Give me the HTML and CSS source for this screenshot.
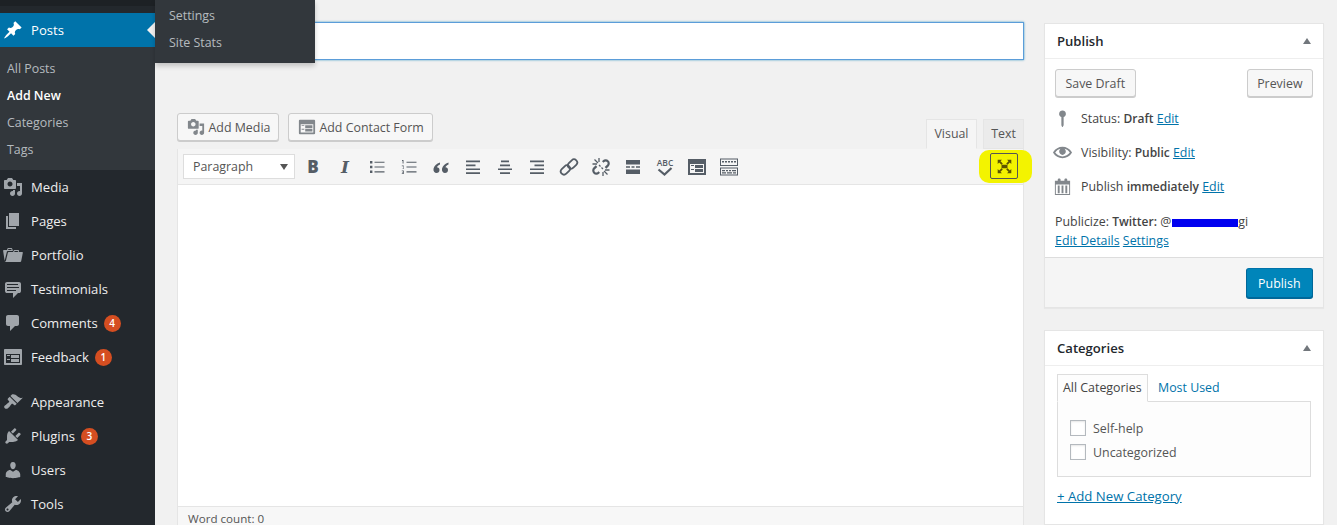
FILE: index.html
```html
<!DOCTYPE html>
<html lang="en">
<head>
<meta charset="utf-8">
<title>Add New Post</title>
<link rel="stylesheet" href="styles.css">
</head>
<body>
<nav class="nav">
  <div class="nav-top"></div>
  <a class="nav-row current"><svg class="nav-ico" viewBox="0 0 20 20"><path d="M10.44 3.02l1.82-1.82 6.36 6.35-1.83 1.82c-1.05-.68-2.48-.57-3.41.36l-.75.75c-.92.93-1.04 2.35-.35 3.41l-1.83 1.82-2.41-2.41-2.8 2.79c-.42.42-3.38 2.71-3.8 2.29s1.86-3.39 2.28-3.81l2.79-2.79L4.1 9.36l1.83-1.82c1.05.69 2.48.57 3.4-.36l.75-.75c.93-.92 1.05-2.35.36-3.41z"/></svg>Posts</a>
  <div class="sub">
    <a class="sub-row">All Posts</a>
    <a class="sub-row on">Add New</a>
    <a class="sub-row">Categories</a>
    <a class="sub-row">Tags</a>
  </div>
  <a class="nav-row"><svg class="nav-ico" viewBox="0 0 20 20"><path d="M13 11V4c0-.55-.45-1-1-1h-1.67L9 1H5L3.67 3H2c-.55 0-1 .45-1 1v7c0 .55.45 1 1 1h10c.55 0 1-.45 1-1zM7 4.5c1.38 0 2.5 1.12 2.5 2.5S8.38 9.5 7 9.5 4.5 8.38 4.5 7 5.62 4.5 7 4.5zM14 6h5v10.5c0 1.38-1.12 2.5-2.5 2.5S14 17.88 14 16.5s1.12-2.5 2.5-2.5c.17 0 .34.02.5.05V9h-3V6zm-4 8.05V13h2v3.5c0 1.38-1.12 2.5-2.5 2.5S7 17.88 7 16.5 8.12 14 9.5 14c.17 0 .34.02.5.05z"/></svg>Media</a>
  <a class="nav-row"><svg class="nav-ico" viewBox="0 0 20 20"><path d="M6 15V2h10v13H6zm-1 1h8v2H3V5h2v11z"/></svg>Pages</a>
  <a class="nav-row"><svg class="nav-ico" viewBox="0 0 20 20"><path d="M4 5H.78c-.37 0-.74.32-.69.84l1.56 9.99S3.5 8.47 3.86 6.7c.11-.53.61-.7.98-.7H10s-.7-2.08-.77-2.31C9.11 3.25 8.89 3 8.45 3H5.14c-.36 0-.7.23-.8.64C4.25 4.04 4 5 4 5zm4.88 0h-4s.42-1 .87-1h2.13c.48 0 1 1 1 1zM2.67 16.25c-.31.47-.76.75-1.26.75h15.73c.54 0 .92-.31 1.03-.83.44-2.19 1.68-8.44 1.68-8.44.07-.5-.3-.73-.62-.73H16V5.53c0-.16-.26-.53-.66-.53h-3.76c-.52 0-.87.58-.87.58L10 7H5.59c-.32 0-.63.19-.69.5 0 0-1.59 6.7-1.72 7.33-.07.37-.22.99-.51 1.42zM15.38 7H11s.58-1 1.13-1h2.29c.71 0 .96 1 .96 1z"/></svg>Portfolio</a>
  <a class="nav-row"><svg class="nav-ico" viewBox="0 0 20 20"><path fill-rule="evenodd" d="M4 3h12c.55 0 1.02.2 1.41.59S18 4.45 18 5v7c0 .55-.2 1.02-.59 1.41S16.55 14 16 14h-1l-5 5v-5H4c-.55 0-1.02-.2-1.41-.59S2 12.55 2 12V5c0-.55.2-1.02.59-1.41S3.45 3 4 3zm11 2H4v1h11V5zm1 3H4v1h12V8zm-3 3H4v1h9v-1z"/></svg>Testimonials</a>
  <a class="nav-row"><svg class="nav-ico" viewBox="0 0 20 20"><path d="M5 2h9c1.1 0 2 .9 2 2v7c0 1.1-.9 2-2 2h-2l-5 5v-5H5c-1.1 0-2-.9-2-2V4c0-1.1.9-2 2-2z"/></svg>Comments<span class="count">4</span></a>
  <a class="nav-row"><svg class="nav-ico" viewBox="0 0 20 20"><path fill-rule="evenodd" d="M2 2h16c.55 0 1 .45 1 1v14c0 .55-.45 1-1 1H2c-.55 0-1-.45-1-1V3c0-.55.45-1 1-1zm15 14V7H3v9h14zM4 8v1h3V8H4zm4 0v3h8V8H8zm-4 4v1h3v-1H4zm4 0v3h8v-3H8z"/></svg>Feedback<span class="count">1</span></a>
  <div class="nav-sep"></div>
  <a class="nav-row"><svg class="nav-ico" viewBox="0 0 20 20"><path d="M14.48 11.06L7.41 3.99l1.5-1.5c.5-.56 2.3-.47 3.51.32 1.21.8 1.43 1.28 2.91 2.1 1.18.64 2.45 1.26 4.45.85zm-.71.71L6.7 4.7 4.93 6.47c-.39.39-.39 1.02 0 1.41l1.06 1.06c.39.39.39 1.03 0 1.42-.6.6-1.43 1.11-2.21 1.69-.35.26-.7.53-1.01.84C1.43 13.23.4 14.75 1.8 16.15c1.41 1.41 2.92.38 4.25-.95.31-.31.58-.66.84-1.01.58-.78 1.09-1.61 1.69-2.21.39-.39 1.02-.39 1.41 0l1.06 1.06c.39.39 1.02.39 1.41 0z"/></svg>Appearance</a>
  <a class="nav-row"><svg class="nav-ico" viewBox="0 0 20 20"><path d="M13.11 4.36L9.87 7.6 8 5.73l3.24-3.24c.35-.34 1.05-.2 1.56.32.52.51.66 1.21.31 1.55zm-8 1.77l.91-1.12 9.01 9.01-1.19.84c-.71.71-2.63 1.16-3.82 1.16H6.14L4.9 17.26c-.59.59-1.54.59-2.12 0-.59-.58-.59-1.53 0-2.12l1.24-1.24v-3.88c0-1.13.4-3.19 1.09-3.89zm7.26 3.97l3.24-3.24c.34-.35 1.04-.21 1.55.31.52.51.66 1.21.31 1.55l-3.24 3.25z"/></svg>Plugins<span class="count">3</span></a>
  <a class="nav-row"><svg class="nav-ico" viewBox="0 0 20 20"><path d="M10 9.25c-2.27 0-2.73-3.44-2.73-3.44C7 4.02 7.82 2 9.97 2c2.16 0 2.98 2.02 2.71 3.81 0 0-.41 3.44-2.68 3.44zm0 2.57L12.72 10c2.39 0 4.52 2.33 4.52 4.53v2.49s-3.65 1.13-7.24 1.13c-3.65 0-7.24-1.13-7.24-1.13v-2.49c0-2.25 1.94-4.48 4.47-4.48z"/></svg>Users</a>
  <a class="nav-row"><svg class="nav-ico" viewBox="0 0 20 20"><path fill-rule="evenodd" d="M16.68 9.77c-1.34 1.34-3.3 1.67-4.95.99l-5.41 6.52c-.99.99-2.59.99-3.58 0s-.99-2.59 0-3.57l6.52-5.42c-.68-1.65-.35-3.61.99-4.95 1.28-1.28 3.12-1.62 4.72-1.06l-2.89 2.89 2.82 2.82 2.86-2.87c.53 1.58.18 3.39-1.08 4.65zM3.81 16.21c.4.39 1.04.39 1.43 0 .4-.4.4-1.04 0-1.43-.39-.4-1.03-.4-1.43 0-.39.39-.39 1.03 0 1.43z"/></svg>Tools</a>
</nav>

<div class="flyout">
  <a class="fly-row">Settings</a>
  <a class="fly-row">Site Stats</a>
</div>
<div class="nav-arrow"></div>

<main class="content">
  <section class="editor-col">
    <div class="title-input"></div>
    <div class="media-bar">
      <div class="media-btns">
        <a class="btn"><svg class="btn-ico" viewBox="0 0 20 20"><path d="M13 11V4c0-.55-.45-1-1-1h-1.67L9 1H5L3.67 3H2c-.55 0-1 .45-1 1v7c0 .55.45 1 1 1h10c.55 0 1-.45 1-1zM7 4.5c1.38 0 2.5 1.12 2.5 2.5S8.38 9.5 7 9.5 4.5 8.38 4.5 7 5.62 4.5 7 4.5zM14 6h5v10.5c0 1.38-1.12 2.5-2.5 2.5S14 17.88 14 16.5s1.12-2.5 2.5-2.5c.17 0 .34.02.5.05V9h-3V6zm-4 8.05V13h2v3.5c0 1.38-1.12 2.5-2.5 2.5S7 17.88 7 16.5 8.12 14 9.5 14c.17 0 .34.02.5.05z"/></svg>Add Media</a>
        <a class="btn"><svg class="btn-ico" viewBox="0 0 20 20"><path fill-rule="evenodd" d="M2 2h16c.55 0 1 .45 1 1v14c0 .55-.45 1-1 1H2c-.55 0-1-.45-1-1V3c0-.55.45-1 1-1zm15 14V7H3v9h14zM4 8v1h3V8H4zm4 0v3h8V8H8zm-4 4v1h3v-1H4zm4 0v3h8v-3H8z"/></svg>Add Contact Form</a>
      </div>
      <div class="mode-tabs">
        <a class="mode-tab active">Visual</a>
        <a class="mode-tab">Text</a>
      </div>
    </div>
    <div class="editor">
      <div class="toolbar">
        <div class="format-select">Paragraph<span class="caret"></span></div>
        <span class="tool tool-b">B</span>
        <span class="tool tool-i">I</span>
        <span class="tool"><svg class="ti" viewBox="0 0 20 20"><path d="M3 4h2.400v2.400H3zM3 8.800h2.400v2.400H3zM3 13.600h2.400V16H3zM7.500 4.700h10v1.100h-10zM7.500 9.500h10v1.100h-10zM7.500 14.300h10v1.100h-10z"/></svg></span>
        <span class="tool"><svg class="ti" viewBox="0 0 20 20"><path d="M3 3h1.500v3.500H3.600V4H3zM2.800 8.500h2v3.200H3.700v-.7h.6V9.300H2.800zM2.800 13.500h2v3.500h-2v-.8h1.200v-.6H3v-.6h1V14.300H2.800zM7.500 4.700h10v1.100h-10zM7.500 9.500h10v1.100h-10zM7.500 14.300h10v1.100h-10z"/></svg></span>
        <span class="tool"><svg class="ti" viewBox="0 0 20 20"><path d="M9 5.500C5.500 6.500 3 8.800 2.500 11.800c-.4 2.500 1 4.200 3 4.200 1.800 0 3-1.300 3-3 0-1.600-1.100-2.700-2.600-2.700.4-1.100 1.600-2.100 3.100-2.700zM17.500 5.500c-3.500 1-6 3.300-6.500 6.300-.4 2.500 1 4.200 3 4.200 1.800 0 3-1.300 3-3 0-1.600-1.100-2.700-2.600-2.700.4-1.100 1.600-2.100 3.100-2.700z"/></svg></span>
        <span class="tool"><svg class="ti" viewBox="0 0 20 20"><path d="M3 3.500h14v1.700H3zM3 7.600h9.500v1.700H3zM3 11.400h14v1.700H3zM3 15.300h14V17H3z"/></svg></span>
        <span class="tool"><svg class="ti" viewBox="0 0 20 20"><path d="M6 3.500h8v1.700H6zM5 7.600h10v1.700H5zM3 11.400h14v1.700H3zM5 15.300h10V17H5z"/></svg></span>
        <span class="tool"><svg class="ti" viewBox="0 0 20 20"><path d="M3 3.500h14v1.700H3zM7.500 7.600H17v1.700H7.500zM3 11.400h14v1.700H3zM3 15.300h14V17H3z"/></svg></span>
        <span class="tool"><svg class="ti" viewBox="0 0 20 20"><rect class="ln" x="1.200" y="9.800" width="10.500" height="6.400" rx="3.200" transform="rotate(-45 6.450 13)"/><rect class="ln" x="8.300" y="3.800" width="10.500" height="6.400" rx="3.200" transform="rotate(-45 13.550 7)"/></svg></span>
        <span class="tool"><svg class="ti" viewBox="0 0 20 20"><path class="ln heavy" d="M11.800 5l.7-.7a3 3 0 0 1 4.300 0 3 3 0 0 1 0 4.300l-2.300 2.300M8.200 15l-.7.700a3 3 0 0 1-4.300 0 3 3 0 0 1 0-4.300l2.300-2.300"/><path class="ln thin" d="M3.500 2.500l3.500 3.500M1.500 7h4.500M8 1v4M16.500 17.500L13 14M18.500 13H14M12 19v-4M8 8l1.500 1.500M12 12l-1.500-1.500"/></svg></span>
        <span class="tool"><svg class="ti" viewBox="0 0 20 20"><path d="M3 3h14v4.500H3zM3 12.500h14V17H3zM3 9.300h4v1.400H3zM8.500 9.300h3v1.400h-3zM13 9.300h4v1.400h-4z"/></svg></span>
        <span class="tool tool-abc"><span class="abc">ABC</span><svg class="abc-check" viewBox="0 0 16 9"><path class="ln check-mark" d="M1.500 2.500l6 5 7-6.500"/></svg></span>
        <span class="tool"><svg class="ti" viewBox="0 0 20 20"><path fill-rule="evenodd" d="M1 2h18v16H1zM3 7v9h14V7zM4 8v1h3V8zM8 8v3h8V8zM4 12v1h3v-1zM8 12v3h8v-3z"/></svg></span>
        <span class="tool"><svg class="ti" viewBox="0 0 20 20"><path fill-rule="evenodd" d="M1 1.500h18V9H1zM2 2.500V8h16V2.500zM3 4h2v1.500H3zM6 4h2v1.500H6zM9 4h2v1.500H9zM12 4h2v1.500h-2zM15 4h2v1.500h-2zM1 10.500h18v8H1zM2 11.500v6h16v-6zM3 13h3v1.300H3zM7 13h2v1.300H7zM10 13h2v1.300h-2zM13 13h4v1.300h-4zM3 15.300h4v1.200H3zM8 15.300h5v1.200H8zM14 15.300h3v1.200h-3z"/></svg></span>
        <span class="full-blob"><span class="full-btn"><svg class="ti" viewBox="0 0 20 20"><path d="M2 2h5L5.300 3.700 8 6.400 6.400 8 3.700 5.300 2 7zM18 2v5l-1.700-1.700L13.600 8 12 6.400l2.700-2.700L13 2zM2 18v-5l1.700 1.700L6.400 12 8 13.600l-2.700 2.700L7 18zM18 18h-5l1.700-1.700L12 13.600l1.600-1.600 2.700 2.700L18 13zM6.500 7.800h7v4.400h-7z"/></svg></span></span>
      </div>
      <div class="editor-body"></div>
      <div class="editor-status">Word count: 0</div>
    </div>
  </section>

  <aside class="side-col">
    <section class="card card-publish">
      <header class="card-head"><h2>Publish</h2><span class="toggle"></span></header>
      <div class="pub-actions">
        <a class="btn btn-plain">Save Draft</a>
        <a class="btn btn-plain">Preview</a>
      </div>
      <div class="pub-row"><svg class="pub-ico" viewBox="0 0 20 20"><path d="M10 1.500a3.500 3.500 0 0 1 1.200 6.800V17l-1 2h-.6l-.8-2V8.300A3.500 3.500 0 0 1 10 1.500z"/></svg><span>Status: <b>Draft</b> <a class="link">Edit</a></span></div>
      <div class="pub-row"><svg class="pub-ico" viewBox="0 0 20 20"><path fill-rule="evenodd" d="M19.700 9.400C17.700 6 14 3.900 10 3.900S2.300 6 .3 9.400L0 10l.3.600c2 3.400 5.700 5.500 9.700 5.500s7.700-2.100 9.700-5.500l.3-.6-.3-.6zM10 14.100c-3.100 0-6-1.600-7.700-4.100C3.600 8 5.700 6.600 8 6.100c-.9.600-1.500 1.700-1.500 2.900 0 1.900 1.600 3.500 3.500 3.500s3.500-1.600 3.500-3.500c0-1.200-.6-2.300-1.500-2.900 2.300.5 4.400 1.900 5.700 3.900-1.700 2.500-4.600 4.100-7.700 4.100z"/></svg><span>Visibility: <b>Public</b> <a class="link">Edit</a></span></div>
      <div class="pub-row"><svg class="pub-ico" viewBox="0 0 20 20"><path fill-rule="evenodd" d="M15 4h3v15H2V4h3V3c0-.41.15-.76.44-1.060.29-.29.65-.44 1.060-.44s.77.15 1.060.44c.29.3.44.65.44 1.060v1h4V3c0-.41.15-.76.44-1.060.29-.29.65-.44 1.060-.44s.77.15 1.060.44c.29.3.44.65.44 1.060v1zM17 18V8H3v10h14zM5 9h2v8H5zM9 9h2v8H9zM13 9h2v8h-2z"/></svg><span>Publish <b>immediately</b> <a class="link">Edit</a></span></div>
      <div class="publicize">
        <div>Publicize: <b>Twitter:</b> @<span class="redact"></span>gi</div>
        <div><a class="link">Edit Details</a> <a class="link">Settings</a></div>
      </div>
      <footer class="pub-foot"><a class="btn btn-primary">Publish</a></footer>
    </section>

    <section class="card card-cats">
      <header class="card-head"><h2>Categories</h2><span class="toggle"></span></header>
      <div class="cat-tabs">
        <a class="cat-tab active">All Categories</a>
        <a class="cat-tab">Most Used</a>
      </div>
      <div class="cat-panel">
        <label class="cat-item"><span class="check"></span>Self-help</label>
        <label class="cat-item"><span class="check"></span>Uncategorized</label>
      </div>
      <a class="link add-cat">+ Add New Category</a>
    </section>
  </aside>
</main>
</body>
</html>
```

FILE: styles.css
```css
* { box-sizing: border-box; }
html, body { margin: 0; height: 525px; overflow: hidden; }
body {
  display: flex;
  background: #f1f1f1;
  font-family: "Open Sans", "Noto Sans", sans-serif;
  font-size: 12.4px;
  color: #444;
  position: relative;
}
b { font-weight: 600; font-size: 12px; }

.nav { width: 155px; flex: none; height: 525px; background: #23282d; overflow: hidden; }
.nav-top { height: 13px; border-top: 6px solid #1d2125; }
.nav-row {
  display: flex; align-items: center; height: 34px;
  color: #eee; font-size: 13.1px; padding-left: 31px; position: relative;
}
.nav-ico { position: absolute; left: 3px; top: 7px; width: 20px; height: 20px; fill: #a0a5aa; }
.nav-row.current { background: #0073aa; color: #fff; }
.nav-row.current .nav-ico { fill: #fff; }
.nav-sep { height: 11px; }
.sub { background: #32373c; padding: 8px 0 7px; }
.sub-row { display: flex; align-items: center; height: 27px; padding-left: 7px; color: rgba(240,245,250,.7); }
.sub-row.on { color: #fff; font-weight: 600; }
.count {
  display: inline-flex; align-items: center; justify-content: center;
  min-width: 17px; height: 17px; padding: 0 5px; margin-left: 6px;
  border-radius: 9px; background: #d54e21; color: #fff; font-size: 10px; font-weight: 600;
}
.nav-arrow {
  position: absolute; left: 147px; top: 22px; width: 0; height: 0;
  border: 8px solid transparent; border-left: 0; border-right-color: #f1f1f1;
}
.flyout {
  position: absolute; left: 155px; top: 0; width: 160px; height: 63px; z-index: 5;
  background: #32373c; box-shadow: 0 3px 5px rgba(0,0,0,.2); padding-top: 2px;
}
.fly-row { display: flex; align-items: center; height: 27px; padding-left: 14px; color: rgba(240,245,250,.7); }

.content { flex: 1; display: flex; gap: 20px; padding: 22px 13px 0 22px; align-items: flex-start; min-width: 0; }
.editor-col { width: 847px; flex: none; }
.title-input {
  height: 38px; background: #fff; border: 1px solid #5b9dd9;
  box-shadow: 0 0 2px rgba(30,140,190,.8);
}
.media-bar { display: flex; justify-content: space-between; align-items: flex-end; margin-top: 53px; height: 36px; }
.media-btns { display: flex; gap: 8.5px; align-self: flex-start; }
.btn {
  display: inline-flex; align-items: center; height: 28px; padding: 0 8px 0 9px;
  background: #f7f7f7; border: 1px solid #ccc; border-radius: 3px;
  box-shadow: 0 1px 0 #ccc; color: #555; white-space: nowrap;
}
.btn-ico { width: 18px; height: 18px; fill: #82878c; margin-right: 3.5px; flex: none; }
.mode-tabs { display: flex; gap: 6px; margin-top: -22px; height: 30px; align-self: flex-end; }
.mode-tab {
  display: flex; align-items: center; justify-content: center; height: 30px; width: 41px; padding-bottom: 2px;
  background: #ebebeb; border: 1px solid #e5e5e5; color: #555;
}
.mode-tab.active { width: 51px; background: #f5f5f5; border-bottom-color: #f5f5f5; position: relative; z-index: 1; }

.editor { border: 1px solid #e5e5e5; background: #fff; height: 377px; }
.toolbar {
  display: flex; align-items: center; height: 36px; background: #f5f5f5;
  border-bottom: 1px solid #e5e5e5; padding: 0 5px; margin-top: -1px;
}
.format-select {
  display: flex; align-items: center; justify-content: space-between;
  width: 112px; height: 25px; background: #fff; border: 1px solid #ddd;
  padding: 0 6px 0 9px; margin-right: 2px; color: #555; flex: none;
}
.caret { width: 0; height: 0; border: 4px solid transparent; border-top: 6px solid #555; border-bottom: 0; }
.tool { width: 32px; height: 26px; display: flex; align-items: center; justify-content: center; flex: none; color: #555d66; }
.ti { width: 20px; height: 20px; fill: #555d66; }
.ln { fill: none; stroke: #555d66; stroke-width: 1.8; }
.ln.heavy { stroke-width: 2.2; }
.ln.thin { stroke-width: 1.3; }
.tool-b { font: 800 17px "Open Sans", sans-serif; }
.tool-i { font: italic 700 17px "DejaVu Serif", serif; }
.tool-abc { flex-direction: column; position: relative; }
.abc { font: 600 8.5px/9px "Open Sans", sans-serif; color: #555d66; }
.abc-check { width: 16px; height: 9px; }
.check-mark { stroke-width: 2.2; }
.full-blob {
  display: flex; flex: none; width: 53px; height: 33px; margin: 0 -14px 0 auto; padding: 3px 14px 4px 11px;
  background: #f3f300; border-radius: 10px; position: relative; z-index: 1;
}
.full-btn {
  flex: 1; display: flex; align-items: center; justify-content: center;
  border: 1px solid #555; border-radius: 2px;
}
.full-btn .ti { width: 17px; height: 17px; fill: #5c5400; }
.editor-body { height: 321px; background: #fff; }
.editor-status {
  height: 20px; background: #f7f7f7; border-top: 1px solid #e5e5e5;
  padding: 4px 0 0 10px; font-size: 11.6px; line-height: 16px; color: #555;
}

.side-col { width: 280px; flex: none; display: flex; flex-direction: column; gap: 22px; margin-top: 1px; }
.card { background: #fff; border: 1px solid #e5e5e5; box-shadow: 0 1px 1px rgba(0,0,0,.04); }
.card-head {
  display: flex; align-items: center; justify-content: space-between;
  height: 35px; padding: 0 12px; border-bottom: 1px solid #eee;
}
.card-head h2 { margin: 0; font-size: 13.1px; font-weight: 600; color: #23282d; }
.toggle { width: 0; height: 0; border: 4px solid transparent; border-bottom: 6px solid #72777c; border-top: 0; }
.pub-actions { display: flex; justify-content: space-between; padding: 10px 10px 0; }
.btn-plain { height: 28px; padding: 0 9.5px; }
.pub-row { display: flex; align-items: center; height: 34px; color: #444; padding-left: 8px; }
.pub-actions + .pub-row { margin-top: 4px; }
.pub-ico { width: 19px; height: 19px; fill: #82878c; margin-right: 9px; flex: none; }
.link { color: #0073aa; text-decoration: underline; }
.publicize { padding: 9px 10px 0; line-height: 19px; color: #444; height: 54px; }
.redact { display: inline-block; width: 66px; height: 8px; margin-left: 1px; background: #0000f0; vertical-align: -1px; }
.pub-foot { display: flex; justify-content: flex-end; height: 50px; background: #f5f5f5; border-top: 1px solid #ddd; padding: 10px 10px 0; }
.btn-primary { height: 30px; padding: 0 11.5px; background: #0085ba; border-color: #0073aa #006799 #006799; box-shadow: 0 1px 0 #006799; color: #fff; }

.cat-tabs { display: flex; margin: 8px 0 0 12px; height: 28px; position: relative; z-index: 1; }
.cat-tab { display: flex; align-items: center; padding: 0 10px 2px; color: #0073aa; }
.cat-tab.active { width: 91px; padding: 0 0 2px 5px; background: #fdfdfd; border: 1px solid #ddd; border-bottom-color: #fdfdfd; color: #444; }
.cat-panel {
  margin: -1px 12px 0; height: 76px; padding: 14px 12px 0; border: 1px solid #ddd; background: #fdfdfd;
}
.cat-item { display: flex; align-items: center; height: 24px; color: #555; }
.check { width: 16px; height: 16px; background: #fff; border: 1px solid #b4b9be; margin-right: 7px; box-shadow: inset 0 1px 2px rgba(0,0,0,.1); }
.add-cat { display: block; margin: 10px 0 0 12px; font-size: 13.2px; }
.card-cats { height: 195px; }
```
